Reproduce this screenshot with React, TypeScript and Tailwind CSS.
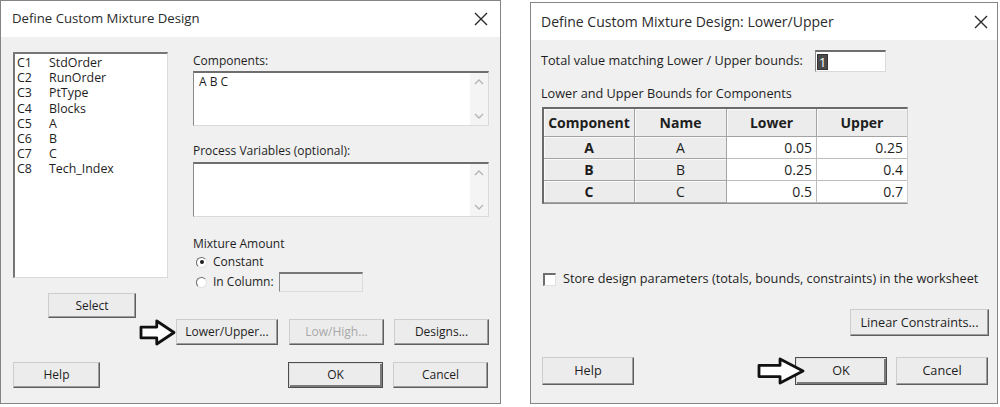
import type { ReactNode } from 'react'

const VARS = [
  ['C1', 'StdOrder'],
  ['C2', 'RunOrder'],
  ['C3', 'PtType'],
  ['C4', 'Blocks'],
  ['C5', 'A'],
  ['C6', 'B'],
  ['C7', 'C'],
  ['C8', 'Tech_Index']
]

const BOUNDS = [
  { comp: 'A', name: 'A', lower: '0.05', upper: '0.25' },
  { comp: 'B', name: 'B', lower: '0.25', upper: '0.4' },
  { comp: 'C', name: 'C', lower: '0.5', upper: '0.7' }
]

type BtnProps = {
  children: ReactNode
  className?: string
  isDefault?: boolean
  disabled?: boolean
}

function Btn({ children, className = '', isDefault, disabled }: BtnProps) {
  const edge = isDefault
    ? 'border border-[#4d4d4d] shadow-[inset_1px_1px_0_#dcdcdc,inset_-2px_-2px_0_#7a7a7a]'
    : 'border border-t-[#cdcdcd] border-l-[#cdcdcd] border-r-[#5f5f5f] border-b-[#5f5f5f] shadow-[inset_-1px_-1px_0_#9c9c9c]'
  return (
    <div
      className={`flex shrink-0 items-center justify-center bg-[#ececec] ${edge} ${
        disabled ? 'text-[#a8a8a8]' : 'text-[#1e1e1e]'
      } ${className}`}
    >
      {children}
    </div>
  )
}

function CloseX() {
  return (
    <svg width="14" height="14" viewBox="0 0 14 14" className="shrink-0">
      <path d="M1 1 L13 13 M13 1 L1 13" stroke="#2a2a2a" strokeWidth="1.4" fill="none" />
    </svg>
  )
}

function Radio({ checked }: { checked?: boolean }) {
  return (
    <span className="flex h-[11px] w-[11px] shrink-0 items-center justify-center rounded-full border border-t-[#6a6a6a] border-l-[#6a6a6a] border-r-[#e2e2e2] border-b-[#e2e2e2] bg-white">
      {checked && <span className="h-[4px] w-[4px] rounded-full bg-[#1e1e1e]" />}
    </span>
  )
}

function ScrollStrip() {
  return (
    <div className="flex w-[18px] flex-col items-center justify-between bg-[#f4f4f4] py-[6px]">
      <svg width="10" height="6" viewBox="0 0 10 6">
        <path d="M1 5 L5 1 L9 5" stroke="#b3b3b3" strokeWidth="1.3" fill="none" />
      </svg>
      <svg width="10" height="6" viewBox="0 0 10 6">
        <path d="M1 1 L5 5 L9 1" stroke="#b3b3b3" strokeWidth="1.3" fill="none" />
      </svg>
    </div>
  )
}

function Arrow({ w, h }: { w: number; h: number }) {
  const shaftTop = h * 0.3
  const shaftBot = h * 0.7
  const neck = w * 0.48
  return (
    <svg width={w} height={h} viewBox={`0 0 ${w} ${h}`} className="shrink-0">
      <path
        d={`M2 ${shaftTop} H${neck} V2 L${w - 2} ${h / 2} L${neck} ${h - 2} V${shaftBot} H2 Z`}
        fill="white"
        stroke="#111"
        strokeWidth="2.8"
        strokeLinejoin="round"
      />
    </svg>
  )
}

function MixtureDialog() {
  return (
    <div className="flex h-[404px] w-[501px] shrink-0 flex-col border border-[#858585]">
      <div className="flex h-[36px] items-center justify-between bg-white pl-[11px] pr-[12px]">
        <span className="text-[13.2px] text-[#2b2b2b]">Define Custom Mixture Design</span>
        <CloseX />
      </div>
      <div className="flex flex-1 flex-col bg-[#f0f0f0] text-[12px] text-[#1e1e1e]">
        <div className="flex pt-[15px]">
          <div className="ml-[12px] flex w-[155px] flex-col">
            <div className="h-[226px] border-t-2 border-l-2 border-r border-b border-t-[#767676] border-l-[#767676] border-r-[#dadada] border-b-[#dadada] bg-white pl-[2px] pt-[1px] text-[12.4px] leading-[15.2px]">
              {VARS.map(([c, n]) => (
                <div key={c} className="flex">
                  <span className="w-[32px]">{c}</span>
                  <span>{n}</span>
                </div>
              ))}
            </div>
            <Btn className="ml-[35px] mt-[15px] h-[25px] w-[88px]">Select</Btn>
          </div>
          <div className="ml-[25px] flex w-[296px] flex-col">
            <div className="h-[18px] leading-[18px]">Components:</div>
            <div className="mt-[1px] flex h-[55px] border-t-2 border-l border-r border-b border-t-[#6e6e6e] border-l-[#8a8a8a] border-r-[#dadada] border-b-[#dadada] bg-white">
              <div className="flex-1 pl-[5px] pt-[1px] leading-[16px]">A B C</div>
              <ScrollStrip />
            </div>
            <div className="mt-[16px] h-[18px] leading-[18px]">Process Variables (optional):</div>
            <div className="mt-[2px] flex h-[55px] border-t-2 border-l border-r border-b border-t-[#6e6e6e] border-l-[#8a8a8a] border-r-[#dadada] border-b-[#dadada] bg-white">
              <div className="flex-1" />
              <ScrollStrip />
            </div>
            <div className="mt-[18px] h-[18px] leading-[18px]">Mixture Amount</div>
            <div className="flex h-[18px] items-center pl-[3px]">
              <Radio checked />
              <span className="ml-[6px]">Constant</span>
            </div>
            <div className="mt-[1px] flex h-[20px] items-center pl-[3px]">
              <Radio />
              <span className="ml-[6px]">In Column:</span>
              <div className="ml-[5px] h-[20px] w-[84px] border-t-2 border-l border-r border-b border-t-[#777777] border-l-[#888888] border-r-[#dcdcdc] border-b-[#dcdcdc] bg-[#f0f0f0]" />
            </div>
          </div>
        </div>
        <div className="mt-[1px] flex h-[26px] items-center">
          <div className="ml-[138px]">
            <Arrow w={37} h={27} />
          </div>
          <Btn className="h-[26px] w-[102px]">Lower/Upper...</Btn>
          <Btn disabled className="ml-[11px] h-[26px] w-[95px]">
            Low/High...
          </Btn>
          <Btn className="ml-[10px] h-[26px] w-[95px]">Designs...</Btn>
        </div>
        <div className="mt-[17px] flex h-[26px]">
          <Btn className="ml-[12px] h-[26px] w-[87px]">Help</Btn>
          <Btn isDefault className="ml-[188px] h-[26px] w-[95px]">
            OK
          </Btn>
          <Btn className="ml-[10px] h-[26px] w-[95px]">Cancel</Btn>
        </div>
      </div>
    </div>
  )
}

function BoundsDialog() {
  const grayCell =
    'flex items-center justify-center border-r border-b border-r-[#a3a3a3] border-b-[#a3a3a3] bg-[#ececec] shadow-[inset_1px_1px_0_#fafafa]'
  const whiteCell =
    'flex items-center justify-end border-r border-b border-r-[#bdbdbd] border-b-[#bdbdbd] bg-white pr-[4px] text-[14px]'
  return (
    <div className="ml-[29px] mt-[2px] flex h-[402px] w-[468px] shrink-0 flex-col border border-[#858585]">
      <div className="flex h-[37px] items-center justify-between bg-white pl-[10px] pr-[9px]">
        <span className="text-[14px] text-[#2b2b2b]">Define Custom Mixture Design: Lower/Upper</span>
        <CloseX />
      </div>
      <div className="flex flex-1 flex-col bg-[#f0f0f0] pl-[10px] pr-[8px] text-[12.7px] text-[#1e1e1e]">
        <div className="mt-[10px] flex h-[22px] items-center">
          <span className="w-[274px]">Total value matching Lower / Upper bounds:</span>
          <div className="flex h-[22px] w-[71px] items-center border-t-2 border-l border-r border-b border-t-[#6e6e6e] border-l-[#8a8a8a] border-r-[#dadada] border-b-[#dadada] bg-white pl-[2px]">
            <span className="bg-[#4b4b4b] px-[1px] leading-[14px] text-white outline outline-1 outline-[#333]">1</span>
          </div>
        </div>
        <div className="mt-[13px] h-[16px] leading-[16px]">Lower and Upper Bounds for Components</div>
        <div className="ml-[1px] mt-[6px] grid w-[366px] grid-cols-[91px_92px_90px_90px] grid-rows-[28px_22px_22px_22px] border-t-2 border-l-2 border-r border-b border-t-[#6a6a6a] border-l-[#6a6a6a] border-r-[#cfcfcf] border-b-[#8f8f8f]">
          <div className={`${grayCell} text-[14px] font-bold`}>Component</div>
          <div className={`${grayCell} text-[14px] font-bold`}>Name</div>
          <div className={`${grayCell} text-[14px] font-bold`}>Lower</div>
          <div className={`${grayCell} border-r-0 text-[14px] font-bold`}>Upper</div>
          {BOUNDS.map(r => (
            <div key={r.comp} className="contents">
              <div className={`${grayCell} text-[14px] font-bold`}>{r.comp}</div>
              <div className={`${grayCell} text-[14px]`}>{r.name}</div>
              <div className={whiteCell}>{r.lower}</div>
              <div className={`${whiteCell} border-r-0`}>{r.upper}</div>
            </div>
          ))}
        </div>
        <div className="mt-[67px] flex h-[16px] items-center">
          <span className="ml-[2px] h-[13px] w-[13px] shrink-0 border-t-2 border-l-2 border-r border-b border-t-[#6e6e6e] border-l-[#6e6e6e] border-r-[#e0e0e0] border-b-[#e0e0e0] bg-white" />
          <span className="ml-[7px]">Store design parameters (totals, bounds, constraints) in the worksheet</span>
        </div>
        <div className="mt-[22px] flex justify-end">
          <Btn className="h-[27px] w-[139px]">Linear Constraints...</Btn>
        </div>
        <div className="relative mt-[21px] flex h-[28px]">
          <Btn className="ml-[1px] h-[28px] w-[92px]">Help</Btn>
          <Btn isDefault className="ml-[161px] h-[28px] w-[92px]">
            OK
          </Btn>
          <Btn className="ml-[9px] h-[28px] w-[92px]">Cancel</Btn>
          <div className="absolute left-[216px] top-0">
            <Arrow w={48} h={28} />
          </div>
        </div>
      </div>
    </div>
  )
}

export default function App() {
  return (
    <div className="flex h-[407px] w-[1000px] items-start overflow-hidden bg-white font-['Open_Sans',sans-serif]">
      <MixtureDialog />
      <BoundsDialog />
    </div>
  )
}
